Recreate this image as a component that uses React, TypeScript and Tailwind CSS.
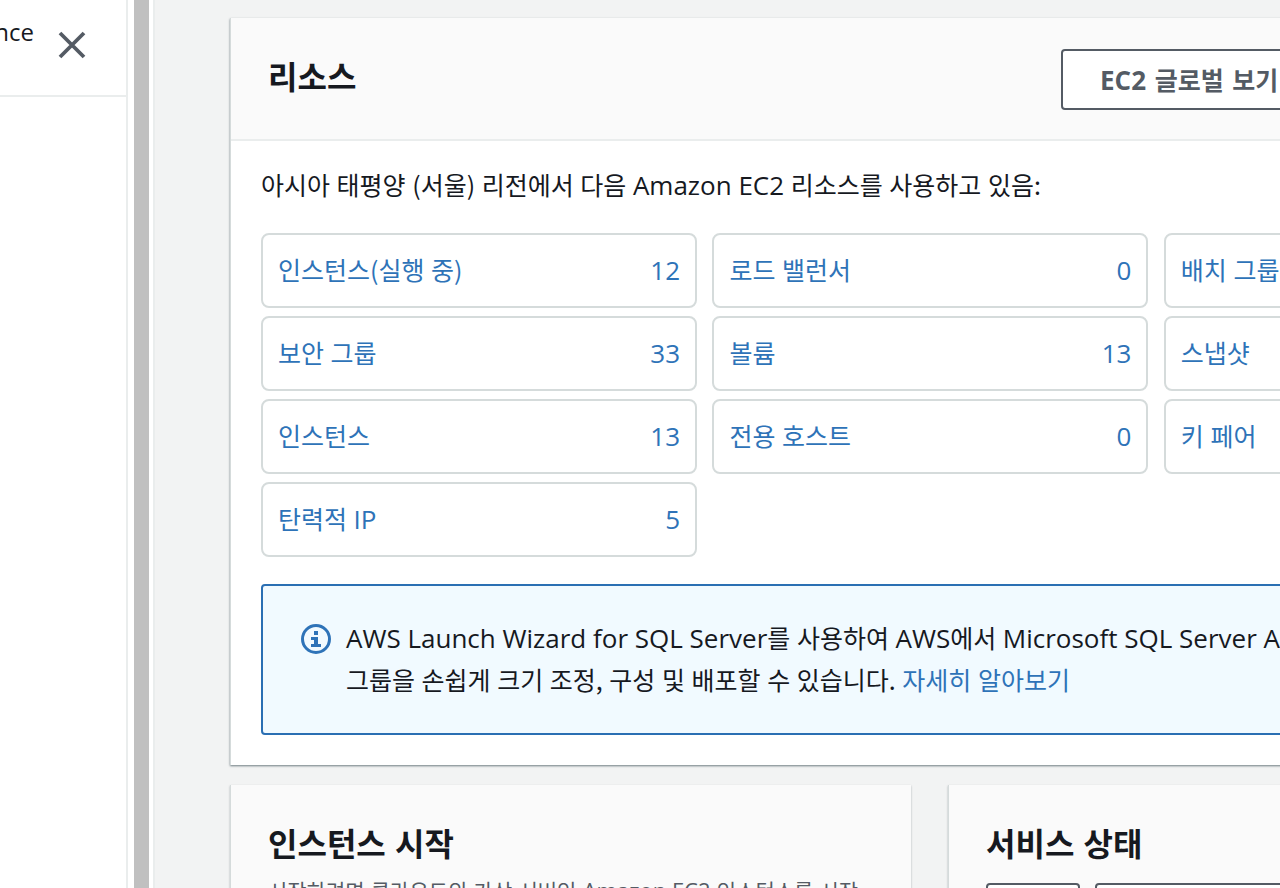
import React from "react";

function L({ children }: { children: React.ReactNode }) {
  return <span className="font-['Open_Sans','Noto_Sans',sans-serif] text-[26px] font-medium [word-spacing:0]">{children}</span>;
}

function Tile({ label, value }: { label: React.ReactNode; value: string }) {
  return (
    <div className="flex h-[75px] items-center justify-between rounded-[8px] border-2 border-[#d5dbdb] bg-white px-[15px] text-[#2e73b8]">
      <span className="whitespace-nowrap pb-[2px]">{label}</span>
      <span className="font-['Open_Sans','Noto_Sans',sans-serif] text-[26px] font-medium">{value}</span>
    </div>
  );
}

export default function App() {
  const tiles: [React.ReactNode, string][] = [
    ["인스턴스(실행 중)", "12"],
    ["로드 밸런서", "0"],
    ["배치 그룹", "0"],
    ["보안 그룹", "33"],
    ["볼륨", "13"],
    ["스냅샷", "0"],
    ["인스턴스", "13"],
    ["전용 호스트", "0"],
    ["키 페어", "3"],
    [<>탄력적 <L>IP</L></>, "5"],
  ];
  return (
    <div className="flex h-[888px] w-[1280px] overflow-hidden bg-white font-['Noto_Sans_CJK_KR','Noto_Sans',sans-serif] text-[25px] leading-[41px] text-[#16191f] [word-spacing:1px]">
      <aside className="flex w-[128px] shrink-0 flex-col overflow-hidden border-r-2 border-[#eaeded]">
        <div className="flex h-[97px] shrink-0 items-start justify-end border-b-2 border-[#eaeded] pr-[40px] pt-[11px]">
          <span className="shrink-0 whitespace-nowrap font-['Open_Sans','Noto_Sans',sans-serif] text-[24px] font-medium leading-[41px]">New EC2 Experience</span>
          <svg className="ml-[24px] mt-[20px] shrink-0" width="28" height="28" viewBox="0 0 28 28" fill="none" stroke="#545b64" strokeWidth="3.8">
            <path d="M2 2 L26 26 M26 2 L2 26" />
          </svg>
        </div>
      </aside>
      <div className="w-[6px] shrink-0 bg-white" />
      <div className="w-[15px] shrink-0 bg-[#c0c0c0]" />
      <div className="w-[4px] shrink-0 bg-white" />
      <div className="w-[2px] shrink-0 bg-[#eaeded]" />
      <main className="min-w-0 flex-1 overflow-hidden bg-[#f2f3f3] pl-[75px] pt-[18px]">
        <section className="w-[1400px] border-l border-[#d5dbdb] bg-white shadow-[0_1px_2px_rgba(0,28,36,0.55)]">
          <header className="flex h-[123px] items-start border-b-2 border-[#eaeded] bg-[#fafafa] pl-[37px] pt-[31px]">
            <h2 className="w-[793px] shrink-0 text-[32px] leading-[52px] font-bold">리소스</h2>
            <button className="h-[61px] w-[300px] shrink-0 rounded-[4px] border-2 border-[#545b64] bg-white pl-[37px] text-left text-[25px] leading-[40px] font-bold whitespace-nowrap text-[#545b64] [word-spacing:3px]">
              <span className="font-['Open_Sans','Noto_Sans',sans-serif] text-[26px] font-bold">EC2</span> 글로벌 보기
            </button>
          </header>
          <div className="px-[30px] pb-[30px] pt-[23px]">
            <p className="whitespace-nowrap">
              아시아 태평양 (서울) 리전에서 다음 <L>Amazon EC2</L> 리소스를 사용하고 있음:
            </p>
            <div className="mt-[27px] grid grid-cols-[436px_436px_1fr] gap-x-[15.4px] gap-y-[8px]">
              {tiles.map(([l, v], i) => (
                <Tile key={i} label={l} value={v} />
              ))}
            </div>
            <div className="mt-[27px] flex h-[151px] gap-[15px] rounded-[4px] border-2 border-[#2a6fb3] bg-[#f1faff] pl-[38px] pt-[31px]">
              <svg className="mt-[7px] shrink-0" width="30" height="30" viewBox="0 0 30 30" fill="none">
                <circle cx="15" cy="15" r="13.5" stroke="#2e73b8" strokeWidth="3" />
                <rect x="13" y="7" width="4" height="4" fill="#2e73b8" />
                <path d="M10 13h7v7h3v3h-10v-3h3v-4h-3z" fill="#2e73b8" />
              </svg>
              <p className="whitespace-nowrap">
                <L>AWS Launch Wizard for SQL Server</L>를 사용하여 <L>AWS</L>에서 <L>Microsoft SQL Server Always On</L> 가용성
                <br />
                그룹을 손쉽게 크기 조정, 구성 및 배포할 수 있습니다. <span className="text-[#2e73b8]">자세히 알아보기</span>
              </p>
            </div>
          </div>
        </section>
        <div className="mt-[20px] flex items-start gap-[37px]">
          <section className="h-[200px] w-[681px] shrink-0 border-l border-[#d5dbdb] bg-[#fafafa] pl-[37px] pt-[31px] shadow-[0_1px_2px_rgba(0,28,36,0.3)]">
            <h2 className="text-[32px] leading-[52px] font-bold [word-spacing:2px]">인스턴스 시작</h2>
            <p className="mt-[2px] whitespace-nowrap text-[21px] text-[#545b64] [word-spacing:1.5px]">
              시작하려면 클라우드의 가상 서버인 <span className="font-['Open_Sans','Noto_Sans',sans-serif] text-[22px] [word-spacing:0]">Amazon EC2</span> 인스턴스를 시작
            </p>
          </section>
          <section className="h-[200px] w-[700px] shrink-0 border-l border-[#d5dbdb] bg-[#fafafa] pl-[37px] pt-[31px] shadow-[0_1px_2px_rgba(0,28,36,0.3)]">
            <h2 className="text-[32px] leading-[52px] font-bold [word-spacing:2px]">서비스 상태</h2>
            <div className="mt-[15px] flex gap-[15px]">
              <div className="h-[40px] w-[94px] rounded-[4px] border-2 border-[#545b64] bg-white" />
              <div className="h-[40px] w-[300px] rounded-[4px] border-2 border-[#545b64] bg-white" />
            </div>
          </section>
        </div>
      </main>
    </div>
  );
}
